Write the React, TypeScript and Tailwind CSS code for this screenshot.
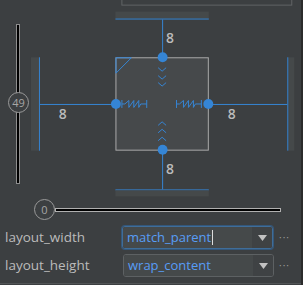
import React from 'react';

const BLUE = '#3585d5';

const Spring = ({ x }: { x: number }) => (
  <path
    d={`M${x},100V108 M${x},104H${x + 3} L${x + 7},100.5V107.5L${x + 12},100.5V107.5L${x + 17},100.5V107.5 L${x + 19},104H${x + 25} M${x + 25},100V108`}
    stroke={BLUE}
    strokeWidth={1}
    fill="none"
  />
);

const Chevron = ({ y, up }: { y: number; up?: boolean }) => (
  <polyline
    points={up ? `159,${y + 3.5} 163,${y} 167,${y + 3.5}` : `159,${y} 163,${y + 3.5} 167,${y}`}
    stroke={BLUE}
    strokeWidth={1}
    fill="none"
  />
);

const Label = ({ x, y, children }: { x: number; y: number; children: React.ReactNode }) => (
  <text x={x} y={y} fill="#bbbbbb" fontSize={14} fontFamily="'Open Sans', sans-serif" fontWeight={600}>
    {children}
  </text>
);

const ConstraintDiagram = () => (
  <svg width={273} height={199} viewBox="30 0 273 199" className="block">
    {/* outer box cut at the top */}
    <rect x={122.5} y={-5} width={171} height={9.5} stroke="#616466" fill="none" />

    {/* top anchor */}
    <rect x={116} y={11} width={94} height={7} fill="#45494a" />
    <rect x={116} y={18} width={94} height={1} fill={BLUE} />
    <line x1={163.5} y1={19} x2={163.5} y2={57} stroke={BLUE} />
    <Label x={167} y={43}>8</Label>

    {/* side anchors */}
    <rect x={31} y={57} width={8} height={94} fill="#45494a" />
    <rect x={39} y={57} width={1} height={94} fill={BLUE} />
    <rect x={290} y={57} width={6} height={94} fill="#45494a" />
    <rect x={289} y={57} width={1} height={94} fill={BLUE} />
    <line x1={40} y1={104.5} x2={116} y2={104.5} stroke={BLUE} />
    <line x1={209} y1={104.5} x2={289} y2={104.5} stroke={BLUE} />
    <Label x={59} y={119}>8</Label>
    <Label x={229} y={119}>8</Label>

    {/* bottom anchor */}
    <line x1={163.5} y1={150} x2={163.5} y2={190} stroke={BLUE} />
    <rect x={116} y={190} width={94} height={1} fill={BLUE} />
    <rect x={116} y={191} width={94} height={6} fill="#45494a" />
    <Label x={167} y={175}>8</Label>

    {/* widget */}
    <rect x={116.5} y={57.5} width={93} height={93} fill="#46494b" stroke="#aaaaaa" />
    <path d="M132,57.5H116.5V73 M132,57.5L116.5,73" stroke={BLUE} fill="none" />

    <Chevron y={67.5} />
    <Chevron y={75.5} />
    <Chevron y={82.5} />
    <Chevron y={122} up />
    <Chevron y={129.5} up />
    <Chevron y={137.5} up />

    <Spring x={122.5} />
    <Spring x={177.5} />

    <circle cx={163.5} cy={57} r={5} fill={BLUE} />
    <circle cx={116.5} cy={104} r={5} fill={BLUE} />
    <circle cx={209.5} cy={104} r={5} fill={BLUE} />
    <circle cx={163.5} cy={150} r={5} fill={BLUE} />
  </svg>
);

const Knob = ({ value }: { value: number }) => (
  <div className="w-[21px] h-[21px] shrink-0 rounded-full border border-[#9a9a9a] bg-[#3c3f41] flex items-center justify-center text-[11px] leading-none text-[#a6a6a6]">
    {value}
  </div>
);

const Dropdown = ({ value, focused }: { value: string; focused?: boolean }) => (
  <div
    className={`w-[151px] h-[23px] rounded-[3px] flex overflow-hidden border ${
      focused ? 'border-[#3f6d99] ring-1 ring-[#34577a]' : 'border-[#5d6163]'
    }`}
  >
    <div className="flex-1 bg-[#45494a] flex items-center pl-[4px] text-[13px] text-[#589df6]">
      {value}
      {focused && <span className="w-px h-[15px] bg-[#dddddd] ml-px" />}
    </div>
    <div className="w-[20px] bg-[#3f4244] flex items-center justify-center">
      <svg width={9} height={6} viewBox="0 0 9 6">
        <polygon points="0,0 9,0 4.5,6" fill="#c2c2c2" />
      </svg>
    </div>
  </div>
);

const App = () => {
  return (
    <div
      className="w-[303px] h-[285px] bg-[#3c3f41] border-r-2 border-[#2b2b2b] overflow-hidden"
      style={{ fontFamily: "'Open Sans', 'DejaVu Sans', sans-serif" }}
    >
      <div className="flex">
        <div className="w-[30px] h-[199px] relative">
          <div className="absolute left-[16px] top-[24px] w-[4px] h-[160px] border border-[#8e8e8e] bg-black" />
          <div className="absolute left-[8px] top-[92px]">
            <Knob value={49} />
          </div>
        </div>
        <ConstraintDiagram />
      </div>

      <div className="h-[21px] flex items-center pl-[34px] pr-[20px]">
        <Knob value={0} />
        <div className="flex-1 h-[4px] border border-[#b0b0b0] bg-black" />
      </div>

      <div className="mt-[6px] flex flex-col gap-[5px] pl-[5px] text-[13.5px] text-[#bbbbbb]">
        <div className="flex items-center">
          <span className="w-[117px]">layout_width</span>
          <Dropdown value="match_parent" focused />
          <span className="ml-[6px] text-[#9a9a9a] text-[10px] tracking-[1px]">···</span>
        </div>
        <div className="flex items-center">
          <span className="w-[118px]">layout_height</span>
          <Dropdown value="wrap_content" />
          <span className="ml-[5px] text-[#9a9a9a] text-[10px] tracking-[1px]">···</span>
        </div>
      </div>

      <div className="mt-[6px] h-px bg-[#515456]" />
    </div>
  );
};

export default App;
